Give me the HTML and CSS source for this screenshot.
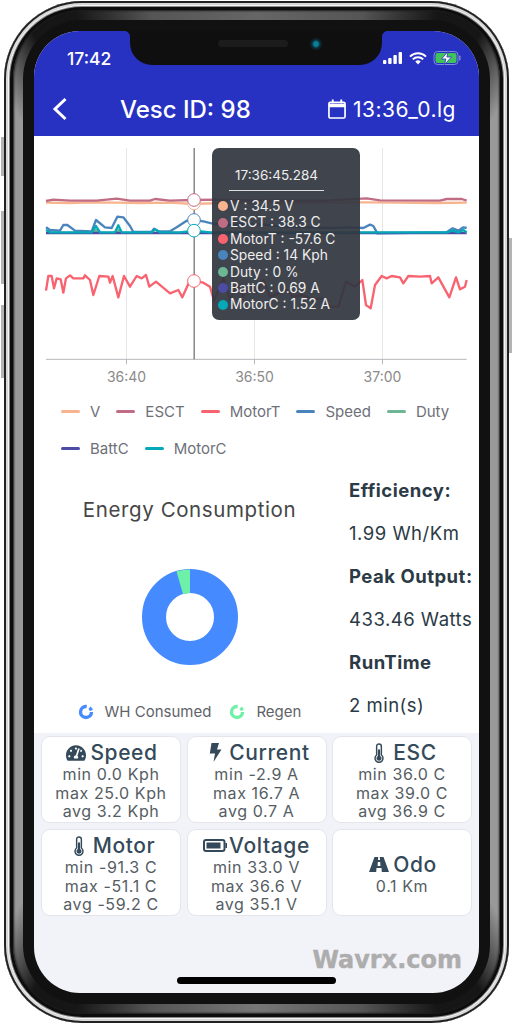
FILE: index.html
```html
<!DOCTYPE html>
<html lang="en">
<head>
  <meta charset="UTF-8">
  <title>Vesc log</title>
  <link rel="stylesheet" href="styles.css">
</head>
<body>
<svg class="defs" width="0" height="0">
  <symbol id="thermo" viewBox="0 0 10 22">
    <path d="M5 1a2.6 2.6 0 0 0-2.6 2.6v9.6a4.4 4.4 0 1 0 5.2 0V3.6A2.6 2.6 0 0 0 5 1z" fill="none" stroke="currentColor" stroke-width="1.6"/>
    <path d="M5 7a1.2 1.2 0 0 0-1.2 1.2v6a2.8 2.8 0 1 0 2.4 0v-6A1.2 1.2 0 0 0 5 7z" fill="currentColor"/>
  </symbol>
</svg>
<span class="side-btn btn-a"></span>
<span class="side-btn btn-b"></span>
<span class="side-btn btn-c"></span>
<span class="side-btn btn-d"></span>
<div class="shell">
 <div class="band">
 <div class="bezel">
  <div class="screen">
    <div class="notch">
      <span class="speaker"></span>
      <span class="camera"></span>
    </div>

    <header class="header">
      <div class="status">
        <span class="clock">17:42</span>
        <div class="status-icons">
          <svg width="20" height="12" viewBox="0 0 20 12">
            <rect x="0" y="8" width="3.4" height="4" rx="1" fill="#fff"/>
            <rect x="5.2" y="6" width="3.4" height="6" rx="1" fill="#fff"/>
            <rect x="10.4" y="3" width="3.4" height="9" rx="1" fill="#fff"/>
            <rect x="15.6" y="0" width="3.4" height="12" rx="1" fill="#fff"/>
          </svg>
          <svg width="18" height="13" viewBox="0 0 18 13">
            <path d="M1 4.6a11.4 11.4 0 0 1 16 0M3.8 7.4a7.4 7.4 0 0 1 10.4 0" fill="none" stroke="#fff" stroke-width="2"/>
            <path d="M6.3 9.6a3.8 3.8 0 0 1 5.4 0L9 12.6z" fill="#fff"/>
          </svg>
          <svg width="29" height="14" viewBox="0 0 28 14">
            <rect x=".5" y=".5" width="24" height="13" rx="3.5" fill="none" stroke="#7f8ad8"/>
            <rect x="2" y="2" width="21" height="10" rx="2" fill="#3fc35a"/>
            <rect x="25.6" y="4.6" width="1.4" height="4.8" rx=".7" fill="#7f8ad8"/>
            <path d="M14.5 0.5 8 8h4.4l-1.4 5.5L18 6h-4.6z" fill="#fff" stroke="#2832c2" stroke-width=".8"/>
          </svg>
        </div>
      </div>
      <div class="titlebar">
        <svg class="back" width="16" height="24" viewBox="0 0 16 24">
          <path d="M13.5 2 3 12l10.5 10" fill="none" stroke="#fff" stroke-width="3"/>
        </svg>
        <span class="title">Vesc ID: 98</span>
        <div class="file">
          <svg width="18" height="20" viewBox="0 0 19 21">
            <path d="M2.5 3.500h14a1.500 1.500 0 0 1 1.500 1.500v13.500a1.500 1.500 0 0 1-1.500 1.500h-14A1.500 1.500 0 0 1 1 18.500V5a1.500 1.500 0 0 1 1.500-1.500z" fill="none" stroke="#fff" stroke-width="1.800"/>
            <path d="M1 5h17v3.600H1z" fill="#fff"/>
            <path d="M5 .5v4M14 .5v4" stroke="#fff" stroke-width="2"/>
          </svg>
          <span>13:36_0.lg</span>
        </div>
      </div>
    </header>

    <main class="content">
      <section class="chart">
        <svg class="plot" width="445" height="254" viewBox="12 -12 1335 762">
          <g stroke="#e6e6e6" stroke-width="3">
            <path d="M289.500 24V658M673.500 24V658M1057.500 24V658"/>
          </g>
          <path d="M48 658H1310M289.500 658v15M673.500 658v15M1057.500 658v15" stroke="#b5b7bc" stroke-width="3" fill="none"/>
          <text class="tick" x="289.500" y="726">36:40</text>
          <text class="tick" x="673.500" y="726">36:50</text>
          <text class="tick" x="1057.500" y="726">37:00</text>
          <g fill="none" stroke-width="7" stroke-linejoin="round">
            <path stroke="#f7b48f" d="M48 188 120 189 180 187 260 188 330 189 420 188 492 192 600 188 760 189 900 188 1010 187 1100 188 1220 189 1310 188"/>
            <path stroke="#c06c84" d="M48 183 70 179 120 182 200 182 260 176 300 182 360 182 375 177 420 182 492 180 560 179 640 181 760 182 900 181 1010 175 1050 181 1230 182 1250 177 1295 177 1310 182"/>
            <path stroke="#f8636f" d="M48 452 55 408 65 408 72 445 80 415 92 418 100 458 108 415 120 406 130 415 160 415 165 406 180 420 190 465 208 408 235 410 240 428 248 408 265 472 282 408 300 440 320 408 335 415 348 405 358 440 378 425 420 460 445 450 457 472 478 425 492 423 520 428 540 440 552 482 580 415 600 480 620 435 640 470 660 440 680 460 700 420 720 470 745 460 770 450 790 470 815 465 850 478 875 475 900 500 925 500 948 425 975 440 997 420 1008 495 1022 505 1035 435 1055 408 1070 415 1085 408 1110 412 1120 430 1135 408 1170 410 1200 408 1205 430 1225 412 1258 472 1278 412 1290 448 1305 440 1310 420"/>
            <path stroke="#4a84bd" d="M48 262 60 270 90 272 100 255 112 255 135 272 185 274 198 240 225 262 245 264 262 230 280 232 300 258 310 276 365 276 372 266 385 274 420 274 440 262 470 242 492 240 520 244 545 250 580 256 640 252 700 254 760 260 840 262 900 264 960 262 1000 264 1020 254 1030 258 1042 280 1250 277 1268 265 1285 272 1300 262 1310 264"/>
            <path stroke="#6cb595" d="M190 277 198 270 206 277M258 277 265 270 272 277"/>
            <path stroke="#4c4ca6" d="M48 279H1310"/>
            <path stroke="#04a9b8" d="M48 270 60 277 185 277 198 258 210 277 255 277 265 256 275 277 365 277 375 268 390 277 450 277 492 272 540 277 1250 277 1268 272 1285 277 1300 270 1310 277"/>
          </g>
          <path d="M492.500 24V658" stroke="#6a6a6a" stroke-width="3.600"/>
          <g fill="#fff" stroke-width="3">
            <circle cx="492" cy="190" r="19" stroke="#f7b48f"/>
            <circle cx="492" cy="180" r="19" stroke="#c06c84"/>
            <circle cx="492" cy="423" r="19" stroke="#f8636f"/>
            <circle cx="492" cy="240" r="19" stroke="#4a84bd"/>
            <circle cx="492" cy="272" r="19" stroke="#04a9b8"/>
          </g>
        </svg>

        <div class="tooltip">
          <div class="tip-time">17:36:45.284</div>
          <ul class="tip-list">
            <li><i class="dot c-v"></i>V : 34.5 V</li>
            <li><i class="dot c-esct"></i>ESCT : 38.3 C</li>
            <li><i class="dot c-motort"></i>MotorT : -57.6 C</li>
            <li><i class="dot c-speed"></i>Speed : 14 Kph</li>
            <li><i class="dot c-duty"></i>Duty : 0 %</li>
            <li><i class="dot c-battc"></i>BattC : 0.69 A</li>
            <li><i class="dot c-motorc"></i>MotorC : 1.52 A</li>
          </ul>
        </div>
      </section>

      <ul class="legend">
        <li><i class="swatch c-v"></i>V</li>
        <li><i class="swatch c-esct"></i>ESCT</li>
        <li><i class="swatch c-motort"></i>MotorT</li>
        <li><i class="swatch c-speed"></i>Speed</li>
        <li><i class="swatch c-duty"></i>Duty</li>
        <li><i class="swatch c-battc"></i>BattC</li>
        <li><i class="swatch c-motorc"></i>MotorC</li>
      </ul>

      <section class="energy">
        <div class="energy-chart">
          <h2>Energy Consumption</h2>
          <svg class="donut" width="96" height="96" viewBox="0 0 96 96">
            <circle cx="48" cy="48" r="36" fill="none" stroke="#458bff" stroke-width="24"/>
            <path d="M48 0.500V24L41 25 34.500 2.500A47.500 47.500 0 0 1 48 0.500z" fill="#6ff0a8"/>
          </svg>
          <div class="energy-legend">
            <span><svg width="16" height="16" viewBox="0 0 16 16"><circle cx="8" cy="8" r="5.500" fill="none" stroke="#458bff" stroke-width="3.400" stroke-dasharray="26 3 3 3"/></svg>WH Consumed</span>
            <span><svg width="16" height="16" viewBox="0 0 16 16"><circle cx="8" cy="8" r="5.500" fill="none" stroke="#6ff0a8" stroke-width="3.400" stroke-dasharray="26 3 3 3"/></svg>Regen</span>
          </div>
        </div>
        <dl class="stats">
          <dt>Efficiency:</dt>
          <dd>1.99 Wh/Km</dd>
          <dt>Peak Output:</dt>
          <dd>433.46 Watts</dd>
          <dt>RunTime</dt>
          <dd>2 min(s)</dd>
        </dl>
      </section>

      <section class="cards">
        <div class="card">
          <div class="card-title">
            <span class="ico"><svg width="20" height="18" viewBox="0 0 576 512"><path fill="currentColor" d="M288 32C128.940 32 0 160.940 0 320c0 52.800 14.250 102.260 39.060 144.800 5.610 9.620 16.300 15.200 27.440 15.200h443c11.140 0 21.830-5.580 27.440-15.200C561.750 422.260 576 372.800 576 320c0-159.060-128.940-288-288-288zm0 64c14.710 0 26.580 10.130 30.320 23.650-1.110 2.260-2.640 4.230-3.450 6.670l-9.220 27.670c-5.130 3.490-10.970 6.010-17.640 6.010-17.670 0-32-14.330-32-32S270.330 96 288 96zM96 384c-17.670 0-32-14.330-32-32s14.330-32 32-32 32 14.330 32 32-14.330 32-32 32zm48-160c-17.670 0-32-14.330-32-32s14.330-32 32-32 32 14.330 32 32-14.330 32-32 32zm246.770-72.410l-61.330 184C343.130 347.330 352 364.540 352 384c0 11.720-3.380 22.550-8.880 32H232.880c-5.500-9.450-8.880-20.280-8.880-32 0-33.940 26.500-61.430 59.900-63.590l61.340-184.010c4.170-12.560 17.730-19.450 30.360-15.170 12.570 4.190 19.350 17.790 15.170 30.360zm14.660 57.200l15.520-46.550c3.470-1.290 7.130-2.230 11.050-2.230 17.670 0 32 14.330 32 32s-14.330 32-32 32c-11.380-.01-20.890-6.280-26.570-15.220zM480 384c-17.670 0-32-14.330-32-32s14.330-32 32-32 32 14.330 32 32-14.330 32-32 32z"/></svg></span>
            Speed
          </div>
          <p>min 0.0 Kph</p>
          <p>max 25.0 Kph</p>
          <p>avg 3.2 Kph</p>
        </div>
        <div class="card">
          <div class="card-title">
            <span class="ico"><svg width="13" height="19" viewBox="0 0 13 19"><path fill="currentColor" d="M2.500 0H10L8 6.500h4.500L4.500 19 6 10.500H.8z"/></svg></span>
            Current
          </div>
          <p>min -2.9 A</p>
          <p>max 16.7 A</p>
          <p>avg 0.7 A</p>
        </div>
        <div class="card">
          <div class="card-title">
            <span class="ico"><svg width="10" height="20"><use href="#thermo"/></svg></span>
            ESC
          </div>
          <p>min 36.0 C</p>
          <p>max 39.0 C</p>
          <p>avg 36.9 C</p>
        </div>
        <div class="card">
          <div class="card-title">
            <span class="ico"><svg width="10" height="20"><use href="#thermo"/></svg></span>
            Motor
          </div>
          <p>min -91.3 C</p>
          <p>max -51.1 C</p>
          <p>avg -59.2 C</p>
        </div>
        <div class="card">
          <div class="card-title">
            <span class="ico"><svg width="24" height="13" viewBox="0 0 24 13"><rect x="1" y="1" width="20.500" height="11" rx="2" fill="none" stroke="currentColor" stroke-width="2"/><rect x="3.500" y="3.500" width="14" height="6" fill="currentColor"/><rect x="22.400" y="4" width="1.600" height="5" fill="currentColor"/></svg></span>
            Voltage
          </div>
          <p>min 33.0 V</p>
          <p>max 36.6 V</p>
          <p>avg 35.1 V</p>
        </div>
        <div class="card">
          <div class="card-title">
            <span class="ico"><svg width="20" height="15" viewBox="0 0 20 15"><path fill="currentColor" d="M5.500 0h3.700l-.2 3h2l-.2-3h3.700L20 15h-7.200l-.3-4h-5l-.3 4H0zM8.800 5l-.2 4h2.800l-.2-4z"/></svg></span>
            Odo
          </div>
          <p>0.1 Km</p>
        </div>
      </section>
    </main>

    <div class="watermark">Wavrx.com</div>
    <span class="home-bar"></span>
  </div>
 </div>
 </div>
</div>
</body>
</html>
```

FILE: styles.css
```css
* {
  margin: 0;
  padding: 0;
  box-sizing: border-box;
}
body {
  width: 513px;
  height: 1024px;
  padding: 1px 4px;
  background: #fff;
  font-family: "Inter", "Liberation Sans", sans-serif;
  position: relative;
  overflow: hidden;
}
ul {
  list-style: none;
}
.defs {
  position: absolute;
}

/* phone frame */
.side-btn {
  position: absolute;
  background: #b4b4b4;
  width: 4px;
}
.btn-a { left: 1px; top: 137px; height: 39px; }
.btn-b { left: 1px; top: 211px; height: 73px; }
.btn-c { left: 1px; top: 305px; height: 73px; }
.btn-d { left: 508px; top: 238px; height: 115px; }
.shell {
  position: relative;
  width: 505px;
  height: 1022px;
  padding: 9px;
  background: #0d0d0d;
  border-radius: 78px;
  box-shadow:
    inset 0 0 0 2px #222,
    inset 0 0 0 4px #d8d8d8,
    inset 0 0 0 5px #f4f4f4,
    inset 0 0 0 6px #8a8a8a;
}
.band {
  height: 100%;
  padding: 10px;
  border-radius: 69px;
  background: conic-gradient(#666 0deg, #555 12deg, #161616 20deg, #161616 25deg, #999 31deg, #999 149deg, #161616 155deg, #161616 160deg, #555 168deg, #777 180deg, #555 192deg, #161616 200deg, #161616 205deg, #999 211deg, #999 329deg, #161616 335deg, #161616 340deg, #555 348deg, #666 360deg);
  box-shadow: inset 0 0 2px 1px #1c1c1c;
}
.bezel {
  height: 100%;
  padding: 11px;
  border-radius: 59px;
  background: #111;
}
.screen {
  position: relative;
  width: 445px;
  height: 962px;
  border-radius: 46px;
  overflow: hidden;
  background: #f2f3f8;
}
.notch {
  position: absolute;
  left: 96px;
  top: 0;
  width: 252px;
  height: 34px;
  background: #0f0f0f;
  border-radius: 0 0 22px 22px;
}
.notch::before,
.notch::after {
  content: "";
  position: absolute;
  top: 0;
  width: 5px;
  height: 5px;
}
.notch::before {
  left: -5px;
  background: radial-gradient(circle at 0 100%, transparent 4.500px, #0f0f0f 5px);
}
.notch::after {
  right: -5px;
  background: radial-gradient(circle at 100% 100%, transparent 4.500px, #0f0f0f 5px);
}
.speaker {
  position: absolute;
  left: 88px;
  top: 9px;
  width: 70px;
  height: 7px;
  border-radius: 4px;
  background: #1c1c1c;
}
.camera {
  position: absolute;
  left: 180px;
  top: 7px;
  width: 12px;
  height: 12px;
  border-radius: 50%;
  background: radial-gradient(circle, #0a7f97 0, #0a7f97 25%, #0b2730 50%, #161616 100%);
}

/* header */
.header {
  height: 105px;
  background: #2832c2;
  color: #fff;
}
.status {
  height: 54px;
  padding: 0 17px 0 33px;
  display: flex;
  justify-content: space-between;
  align-items: center;
}
.clock {
  font-size: 17.500px;
  font-weight: 500;
}
.status-icons {
  display: flex;
  align-items: center;
  gap: 6px;
}
.titlebar {
  height: 50px;
  display: flex;
  align-items: center;
  padding: 0 23px 2px 18px;
}
.back {
  margin-right: 52px;
}
.title {
  font-size: 24px;
  font-weight: 500;
}
.file {
  margin-left: auto;
  display: flex;
  align-items: center;
  gap: 7px;
  font-size: 21px;
  letter-spacing: .5px;
}

/* chart */
.content {
  background: #f2f3f8;
}
.chart {
  position: relative;
  height: 254px;
  background: #fff;
}
.plot {
  display: block;
}
.tick {
  font-size: 42px;
  fill: #8a8a8a;
  text-anchor: middle;
}
.tooltip {
  position: absolute;
  left: 178px;
  top: 12px;
  width: 148px;
  height: 172px;
  padding: 19px 0 0 6px;
  border-radius: 7px;
  background: rgba(50, 54, 64, .93);
  color: #eee;
  font-size: 13.800px;
}
.tip-time {
  width: 95px;
  margin-left: 11px;
  margin-bottom: 7px;
  padding-bottom: 7px;
  border-bottom: 1px solid #ddd;
  font-size: 13.500px;
  text-align: center;
  white-space: nowrap;
}
.tip-list li {
  height: 16.400px;
  line-height: 16.400px;
  display: flex;
  align-items: center;
  white-space: nowrap;
}
.dot {
  width: 10px;
  height: 10px;
  border-radius: 50%;
  margin-right: 2px;
  background: var(--c);
}
.c-v { --c: #f7b48f; }
.c-esct { --c: #c06c84; }
.c-motort { --c: #f8636f; }
.c-speed { --c: #4a84bd; }
.c-duty { --c: #6cb595; }
.c-battc { --c: #4c4ca6; }
.c-motorc { --c: #04a9b8; }

.legend {
  background: #fff;
  padding: 9px 20px 0 27px;
  height: 87px;
  display: flex;
  flex-wrap: wrap;
  align-content: flex-start;
  column-gap: 16px;
  row-gap: 13px;
  color: #6e7079;
  font-size: 15px;
}
.legend li {
  display: flex;
  align-items: center;
  height: 24px;
  gap: 10px;
}
.swatch {
  width: 19px;
  height: 3px;
  border-radius: 2px;
  background: var(--c);
}

/* energy */
.energy {
  background: #fff;
  height: 256px;
  display: flex;
}
.energy-chart {
  width: 311px;
  margin-right: 4px;
  display: flex;
  flex-direction: column;
  align-items: center;
  color: #464646;
}
.energy-chart h2 {
  margin-top: 20px;
  font-size: 20.500px;
  font-weight: 400;
  letter-spacing: .6px;
  line-height: 26px;
}
.donut {
  margin-top: 46px;
}
.energy-legend {
  margin-top: 37px;
  display: flex;
  gap: 18px;
  font-size: 15px;
  color: #5f6368;
}
.energy-legend span {
  display: flex;
  align-items: center;
  gap: 11px;
}
.stats {
  color: #2b3a45;
  font-size: 18.500px;
  line-height: 43px;
  margin-top: -8px;
  white-space: nowrap;
  letter-spacing: .5px;
}
.stats dt {
  font-weight: 700;
}

/* cards */
.cards {
  display: grid;
  grid-template-columns: repeat(3, 140px);
  grid-auto-rows: 87px;
  gap: 6px 5.500px;
  padding: 3px 6px 0 7px;
}
.card {
  background: #fff;
  border: 1px solid #e4e6ec;
  border-radius: 9px;
  padding-top: 3px;
  display: flex;
  flex-direction: column;
  align-items: center;
  justify-content: center;
  text-align: center;
  color: #555d63;
  font-size: 16px;
  line-height: 18.700px;
  letter-spacing: .6px;
  white-space: nowrap;
}
.card-title {
  display: flex;
  align-items: center;
  gap: 2px;
  font-size: 21px;
  line-height: 24px;
  font-weight: 500;
  color: #344a5a;
}
.ico {
  width: 24px;
  display: flex;
  justify-content: center;
  align-items: center;
}

.watermark {
  position: absolute;
  right: 17px;
  bottom: 19px;
  font-family: "DejaVu Sans", sans-serif;
  font-weight: 700;
  font-size: 24px;
  color: #adadad;
  -webkit-text-stroke: .4px #adadad;
}
.home-bar {
  position: absolute;
  left: 143px;
  bottom: 9px;
  width: 159px;
  height: 7px;
  border-radius: 4px;
  background: #000;
}
```
